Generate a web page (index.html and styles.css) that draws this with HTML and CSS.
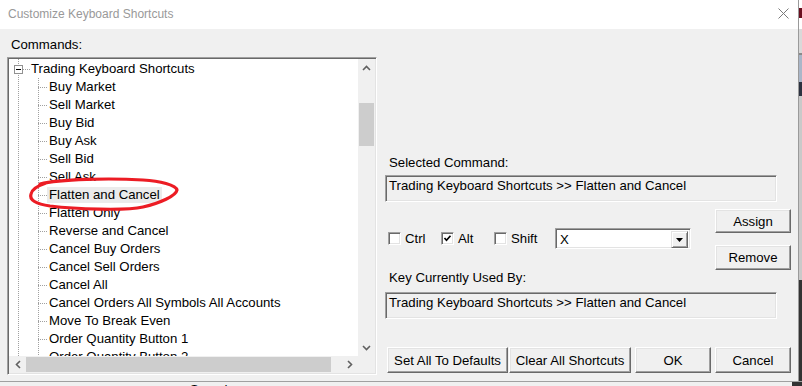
FILE: index.html
```html
<!DOCTYPE html>
<html lang="en">
  <head>
    <meta charset="UTF-8" />
    <title>Customize Keyboard Shortcuts</title>
    <link rel="stylesheet" href="styles.css">
  </head>
  <body>
    <div class="screen">
      <div class="dialog">
        <div class="titlebar">
          <span class="title">Customize Keyboard Shortcuts</span>
          <svg class="close" width="11" height="11" viewBox="0 0 11 11">
            <path d="M0.5 0.5 L10.5 10.5 M10.5 0.5 L0.5 10.5" stroke="#7a7a7a" stroke-width="1" fill="none" />
          </svg>
        </div>
        <div class="client">
          <div class="left-pane">
            <div class="label">Commands:</div>
            <div class="tree-box">
              <div class="tree-area">
                <div class="tree-rows">
                  <div class="row root"><span class="expander"></span><span class="dash short"></span>Trading Keyboard Shortcuts</div>
                  <div class="row child"><span class="dash"></span>Buy Market</div>
                  <div class="row child"><span class="dash"></span>Sell Market</div>
                  <div class="row child"><span class="dash"></span>Buy Bid</div>
                  <div class="row child"><span class="dash"></span>Buy Ask</div>
                  <div class="row child"><span class="dash"></span>Sell Bid</div>
                  <div class="row child"><span class="dash"></span>Sell Ask</div>
                  <div class="row child"><span class="dash"></span><span class="selected">Flatten and Cancel</span></div>
                  <div class="row child"><span class="dash"></span>Flatten Only</div>
                  <div class="row child"><span class="dash"></span>Reverse and Cancel</div>
                  <div class="row child"><span class="dash"></span>Cancel Buy Orders</div>
                  <div class="row child"><span class="dash"></span>Cancel Sell Orders</div>
                  <div class="row child"><span class="dash"></span>Cancel All</div>
                  <div class="row child"><span class="dash"></span>Cancel Orders All Symbols All Accounts</div>
                  <div class="row child"><span class="dash"></span>Move To Break Even</div>
                  <div class="row child"><span class="dash"></span>Order Quantity Button 1</div>
                  <div class="row child"><span class="dash"></span>Order Quantity Button 2</div>
                </div>
                <div class="vscroll">
                  <div class="arrow">
                    <svg width="9" height="6" viewBox="0 0 9 6"><path d="M1 5 L4.5 1.5 L8 5" stroke="#606060" stroke-width="1.6" fill="none" /></svg>
                  </div>
                  <div class="track v">
                    <div class="thumb v"></div>
                  </div>
                  <div class="arrow">
                    <svg width="9" height="6" viewBox="0 0 9 6"><path d="M1 1 L4.5 4.5 L8 1" stroke="#606060" stroke-width="1.6" fill="none" /></svg>
                  </div>
                </div>
              </div>
              <div class="hscroll">
                <div class="arrow">
                  <svg width="6" height="9" viewBox="0 0 6 9"><path d="M5 1 L1.5 4.5 L5 8" stroke="#606060" stroke-width="1.6" fill="none" /></svg>
                </div>
                <div class="track h">
                  <div class="thumb h"></div>
                </div>
                <div class="arrow">
                  <svg width="6" height="9" viewBox="0 0 6 9"><path d="M1 1 L4.5 4.5 L1 8" stroke="#606060" stroke-width="1.6" fill="none" /></svg>
                </div>
                <div class="corner"></div>
              </div>
            </div>
          </div>

          <div class="right-pane">
            <div class="label first">Selected Command:</div>
            <div class="readout">Trading Keyboard Shortcuts &gt;&gt; Flatten and Cancel</div>

            <div class="keys-row">
              <div class="mods">
                <div class="check"><span class="box"></span>Ctrl</div>
                <div class="check"><span class="box">
                  <svg width="9" height="9" viewBox="0 0 9 9"><path d="M1.5 4 L3.5 6.2 L7.5 1.8" stroke="#000" stroke-width="1.7" fill="none" /></svg>
                </span>Alt</div>
                <div class="check wide"><span class="box"></span>Shift</div>
                <div class="combo">
                  <span class="combo-text">X</span>
                  <span class="drop">
                    <svg width="7" height="4" viewBox="0 0 7 4"><path d="M0 0 L7 0 L3.5 4 Z" fill="#000" /></svg>
                  </span>
                </div>
              </div>
              <div class="side-buttons">
                <div class="btn">Assign</div>
                <div class="btn tall">Remove</div>
              </div>
            </div>

            <div class="label">Key Currently Used By:</div>
            <div class="readout second">Trading Keyboard Shortcuts &gt;&gt; Flatten and Cancel</div>

            <div class="bottom-buttons">
              <div class="btn defaults">Set All To Defaults</div>
              <div class="btn clear">Clear All Shortcuts</div>
              <div class="btn ok">OK</div>
              <div class="btn cancel">Cancel</div>
            </div>
          </div>
        </div>
      </div>
      <div class="behind-right"></div>
    </div>
    <div class="behind-bottom"><span>Speed:</span></div>

    <!-- red circle someone drew around the command -->
    <svg class="scribble" width="802" height="386" viewBox="0 0 802 386">
      <path d="M40 184 C60 179 110 178 143 180 C160 181 176 185 177 190 C176 196 160 203 143 207 C125 211 75 209 50 206 C36 204 29 200 31 194 C32 189 37 186 46 183"
            stroke="#ec1c24" stroke-width="3.2" fill="none" stroke-linecap="round" stroke-linejoin="round" />
    </svg>
  </body>
</html>
```

FILE: styles.css
```css
body {
  margin: 0;
  width: 802px;
  height: 386px;
  overflow: hidden;
  position: relative;
  background: #f0f0f0;
  font-family: "Liberation Sans", Arial, sans-serif;
  font-size: 13.2px;
  color: #000;
}
.screen {
  display: flex;
  height: 381px;
}
.dialog {
  width: 798px;
  border-right: 1px solid #9a9a9a;
  display: flex;
  flex-direction: column;
}
.behind-right {
  flex: 1;
  background: linear-gradient(#ffffff 0 8px, #6b1020 8px 18px, #ffffff 18px 29px, #d9d9d9 29px 53px, #8a8a8a 53px 55px, #aab6c8 55px 82px, #2c3240 82px 96px, #c9c9c9 96px 280px, #333 280px);
}
.behind-bottom {
  height: 5px;
  border-top: 1px solid #a0a0a0;
  box-sizing: border-box;
  background: linear-gradient(to right, #f0f0f0 0 792px, #333 792px);
  overflow: hidden;
  padding-left: 190px;
}
.behind-bottom span {
  display: block;
  line-height: 15px;
  font-size: 13px;
}

/* title bar */
.titlebar {
  height: 29px;
  background: #fff;
  display: flex;
  justify-content: space-between;
  align-items: flex-start;
  padding: 0 9px 0 8px;
}
.title {
  font-size: 12px;
  line-height: 14px;
  padding-top: 7px;
  color: #999;
}
.close {
  margin-top: 8px;
}

.client {
  flex: 1;
  display: flex;
  background: #f0f0f0;
}
.label {
  line-height: 15px;
}

/* left side - the tree */
.left-pane {
  width: 378px;
  padding-left: 7px;
}
.left-pane .label {
  margin-top: 8px;
  padding-left: 4px;
}
.tree-box {
  margin-top: 5px;
  width: 370px;
  height: 318px;
  box-sizing: border-box;
  border: 1px solid;
  border-color: #a0a0a0 #fff #fff #a0a0a0;
  box-shadow: inset 1px 1px #696969, inset -1px -1px #e3e3e3;
  padding: 1px;
  display: flex;
  flex-direction: column;
}
.tree-area {
  display: flex;
  height: 297px;
}
.tree-rows {
  flex: 1;
  padding-top: 1px;
  background-color: #fff;
  overflow: hidden;
  background-image:
    repeating-linear-gradient(#a0a0a0 0 1px, transparent 1px 2px),
    repeating-linear-gradient(#a0a0a0 0 1px, transparent 1px 2px);
  background-size: 1px 100%, 1px 100%;
  background-position: 9px 0, 29px 19px;
  background-repeat: no-repeat;
  white-space: nowrap;
}
.row {
  height: 18px;
  line-height: 18px;
  display: flex;
  align-items: center;
}
.row.root {
  padding-left: 5px;
}
.row.child {
  padding-left: 29px;
}
.expander {
  width: 9px;
  height: 9px;
  box-sizing: border-box;
  border: 1px solid #919191;
  background: #fff;
  position: relative;
}
.expander::after {
  content: "";
  position: absolute;
  left: 1px;
  top: 3px;
  width: 5px;
  height: 1px;
  background: #000;
}
.dash {
  width: 9px;
  height: 1px;
  margin-right: 2px;
  background: repeating-linear-gradient(to right, #a0a0a0 0 1px, transparent 1px 2px);
}
.dash.short {
  width: 7px;
  margin-right: 1px;
}
.selected {
  background: #ebebeb;
  line-height: 16px;
  padding: 0 2px;
  margin-left: -2px;
}

/* scrollbars */
.vscroll {
  width: 17px;
  background: #f0f0f0;
  display: flex;
  flex-direction: column;
}
.vscroll .arrow {
  height: 17px;
  display: flex;
  align-items: center;
  justify-content: center;
}
.track.v {
  flex: 1;
  padding-top: 27px;
}
.thumb.v {
  margin-left: 1px;
  width: 15px;
  height: 43px;
  background: #cdcdcd;
}
.hscroll {
  height: 17px;
  display: flex;
  background: #f0f0f0;
}
.hscroll .arrow {
  width: 17px;
  display: flex;
  align-items: center;
  justify-content: center;
}
.track.h {
  flex: 1;
}
.thumb.h {
  margin-top: 1px;
  height: 15px;
  width: 305px;
  background: #cdcdcd;
}
.corner {
  width: 17px;
  background: #f0f0f0;
}

/* right side */
.right-pane {
  width: 406px;
  display: flex;
  flex-direction: column;
}
.right-pane .label {
  padding-left: 4px;
}
.right-pane .label.first {
  margin-top: 126px;
}
.readout {
  margin-top: 5px;
  width: 392px;
  height: 27px;
  box-sizing: border-box;
  border: 1px solid;
  border-color: #a0a0a0 #fff #fff #a0a0a0;
  box-shadow: inset 1px 1px #696969, inset -1px -1px #e3e3e3;
  padding: 2px 3px;
  line-height: 15px;
  background: #f0f0f0;
}
.readout.second {
  margin-top: 7px;
}
.keys-row {
  margin-top: 8px;
  height: 60px;
  display: flex;
  justify-content: space-between;
  align-items: center;
}
.mods {
  display: flex;
  align-items: center;
  padding-left: 3px;
  margin-bottom: 3px;
}
.check {
  width: 53px;
  display: flex;
  align-items: center;
}
.check.wide {
  width: 61px;
}
.box {
  width: 13px;
  height: 13px;
  box-sizing: border-box;
  margin-right: 4px;
  background: #fff;
  border: 1px solid;
  border-color: #a0a0a0 #fff #fff #a0a0a0;
  box-shadow: inset 1px 1px #696969, inset -1px -1px #e3e3e3;
  display: flex;
  align-items: center;
  justify-content: center;
}
.combo {
  width: 136px;
  height: 21px;
  box-sizing: border-box;
  border: 1px solid;
  border-color: #a0a0a0 #fff #fff #a0a0a0;
  box-shadow: inset 1px 1px #696969, inset -1px -1px #e3e3e3;
  background: #fff;
  padding: 2px;
  display: flex;
  justify-content: space-between;
}
.combo-text {
  line-height: 17px;
  padding-left: 2px;
}
.drop {
  width: 17px;
  height: 17px;
  box-sizing: border-box;
  background: #f0f0f0;
  border: 1px solid;
  border-color: #e3e3e3 #696969 #696969 #e3e3e3;
  box-shadow: inset 1px 1px #fff, inset -1px -1px #a0a0a0;
  display: flex;
  align-items: center;
  justify-content: center;
}
.side-buttons {
  display: flex;
  flex-direction: column;
  gap: 12px;
  margin-bottom: 1px;
}
.btn {
  width: 76px;
  height: 24px;
  box-sizing: border-box;
  background: #f0f0f0;
  border: 1px solid;
  border-color: #fff #696969 #696969 #fff;
  box-shadow: inset -1px -1px #a0a0a0, inset 1px 1px #e3e3e3;
  display: flex;
  align-items: center;
  justify-content: center;
}
.btn.tall {
  height: 25px;
}
.bottom-buttons {
  margin-top: 28px;
  display: flex;
  gap: 4px;
}
.bottom-buttons .btn {
  height: 26px;
}
.btn.defaults {
  width: 121px;
  margin-left: 2px;
  margin-right: -3px;
}
.btn.clear {
  width: 122px;
}

.scribble {
  position: absolute;
  left: 0;
  top: 0;
  pointer-events: none;
}
```
